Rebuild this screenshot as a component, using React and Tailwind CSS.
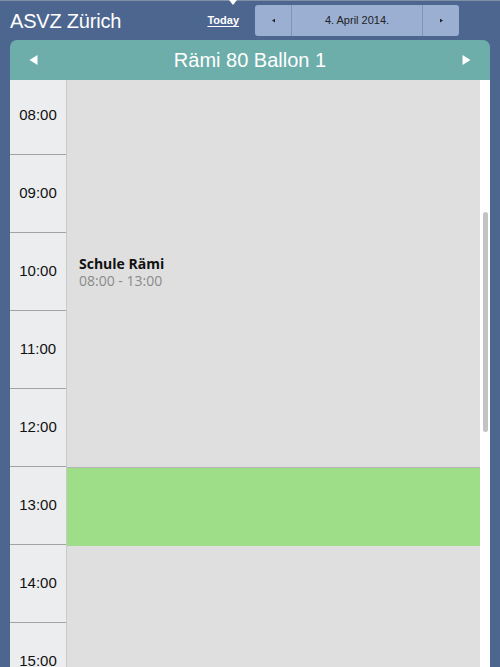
import React from "react";

const hours = ["08:00", "09:00", "10:00", "11:00", "12:00", "13:00", "14:00", "15:00"];

function Arrow({ dir = "left", className = "" }) {
  return (
    <svg width="8" height="10" viewBox="0 0 8 10" className={className}>
      {dir === "left" ? <path d="M8 0 L0 5 L8 10 Z" fill="currentColor" /> : <path d="M0 0 L8 5 L0 10 Z" fill="currentColor" />}
    </svg>
  );
}

export default function App() {
  return (
    <div className="h-[667px] w-[500px] overflow-hidden bg-[#4d6690] font-['Liberation_Sans',Arial,sans-serif] flex flex-col">
      {/* top bar */}
      <div className="relative h-10 flex items-center border-t border-[#8090a8] shrink-0">
        <div className="pl-[10px] text-[20px] text-white tracking-[-0.2px]">ASVZ Zürich</div>
        <span className="absolute left-[229px] top-[-1px] w-0 h-0 border-l-[4px] border-r-[4px] border-t-[5px] border-transparent border-t-white" />
        <a className="ml-auto mr-4 text-[11px] font-bold text-white underline underline-offset-2">Today</a>
        <div className="mr-[41px] flex h-[31px] w-[204px] rounded-[3px] bg-[#9aafd2] text-[#222] text-[11px] overflow-hidden">
          <div className="w-[37px] flex items-center justify-center border-r border-[#7f94b9]">
            <Arrow dir="left" className="w-[3px] h-[5px]" />
          </div>
          <div className="flex-1 flex items-center justify-center">4. April 2014.</div>
          <div className="w-[37px] flex items-center justify-center border-l border-[#7f94b9]">
            <Arrow dir="right" className="w-[3px] h-[5px]" />
          </div>
        </div>
      </div>

      {/* panel */}
      <div className="mx-[10px] flex-1 flex flex-col overflow-hidden">
        <div className="h-10 shrink-0 rounded-t-[7px] bg-[#6daeab] flex items-center px-[19px] text-white">
          <Arrow dir="left" className="w-[9px] h-[10px]" />
          <div className="flex-1 text-center text-[20px]">Rämi 80 Ballon 1</div>
          <Arrow dir="right" className="w-[9px] h-[10px]" />
        </div>
        <div className="flex flex-1 overflow-hidden">
          <div className="w-[57px] shrink-0 bg-[#ecedef] border-r border-[#c9c9c9]">
            {hours.map((h, i) => (
              <div
                key={h}
                className={`flex items-center justify-center text-[15px] text-[#111] border-b border-[#a3a3a3] ${i === 0 ? "h-[75px]" : "h-[78px]"}`}
              >
                <span className={i === 0 ? "mt-[-4px]" : ""}>{h}</span>
              </div>
            ))}
          </div>
          <div className="flex-1 relative bg-[#dfdfdf]">
            <div className="h-[175px]" />
            <div className="pl-3 leading-[17px] font-['Open_Sans',sans-serif]">
              <div className="text-[14px] font-bold text-[#111]">Schule Rämi</div>
              <div className="text-[14px] text-[#8a8a8a]">08:00 - 13:00</div>
            </div>
            <div className="absolute left-0 right-0 top-[387px] h-[79px] bg-[#9ede89] border-t border-[#b5b5b5]" />
          </div>
          <div className="w-[10px] shrink-0 bg-white relative">
            <div className="absolute left-[3px] top-[132px] w-[5px] h-[220px] rounded-full bg-[#c3c3c3]" />
          </div>
        </div>
      </div>
    </div>
  );
}
